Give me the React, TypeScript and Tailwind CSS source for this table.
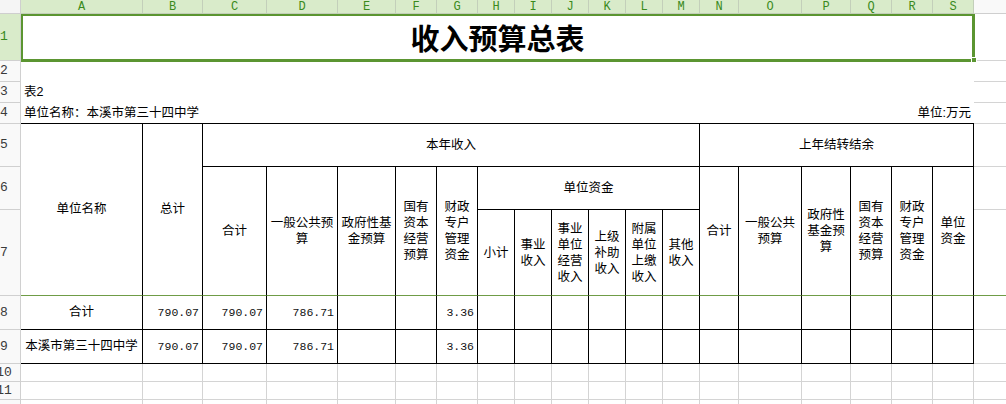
import React from "react";

const cols = ["A","B","C","D","E","F","G","H","I","J","K","L","M","N","O","P","Q","R","S"];

const GREEN_LINE = "border-b-[#6f9c46]";

function RH({ n, sel }: { n: string; sel?: boolean }) {
  return (
    <div
      className={
        "border-r border-b border-[#d0d0d0] overflow-hidden flex items-center font-['Liberation_Mono',monospace] text-[13px] " +
        (sel ? "bg-[#d9ebca] text-[#3a8a1c]" : "bg-[#f9f9f9] text-[#3a3a3a]")
      }
    >
      <span className="w-[8px] flex justify-center shrink-0 whitespace-nowrap">{n}</span>
    </div>
  );
}

function T({ green }: { green?: boolean }) {
  return <div className={"border-b " + (green ? "border-[#6f9c46]" : "border-[#d4d4d4]")} />;
}

function Lines({ t }: { t: string[] }) {
  return (
    <div className="text-center leading-[16px]">
      {t.map((l, i) => (
        <div key={i} className="whitespace-nowrap">{l}</div>
      ))}
    </div>
  );
}

const BC = "border-r border-b border-black flex items-center justify-center";
const BCG = "border-r border-r-black border-b " + GREEN_LINE + " flex items-center justify-center";
const NUM = "border-r border-b border-black flex items-center justify-end pr-[3px] font-['Liberation_Mono',monospace] text-[11.5px] text-[#111]";
const GC = "border-r border-b border-[#d4d4d4]";

function DataRow({ n, name }: { n: string; name: string }) {
  return (
    <>
      <RH n={n} />
      <div className={BC + " whitespace-nowrap"}>{name}</div>
      <div className={NUM}>790.07</div>
      <div className={NUM}>790.07</div>
      <div className={NUM}>786.71</div>
      <div className={BC} />
      <div className={BC} />
      <div className={NUM}>3.36</div>
      <div className={BC} />
      <div className={BC} />
      <div className={BC} />
      <div className={BC} />
      <div className={BC} />
      <div className={BC} />
      <div className={BC} />
      <div className={BC} />
      <div className={BC} />
      <div className={BC} />
      <div className={BC} />
      <div className={BC} />
      <T />
    </>
  );
}

function EmptyRow({ n }: { n: string }) {
  return (
    <>
      <RH n={n} />
      {cols.map((c) => (
        <div key={c} className={GC} />
      ))}
      <T />
    </>
  );
}

export default function App() {
  return (
    <div className="w-[1006px] h-[404px] overflow-hidden bg-white text-black font-['Liberation_Sans','Noto_Sans_CJK_SC',sans-serif] text-[12.5px]">
      <div className="grid grid-cols-[21px_122px_60px_64px_71px_58px_41px_41px_37px_37px_37px_37px_37px_37px_39px_63px_49px_41px_41px_41px_1fr] grid-rows-[14px_47px_21px_21px_21px_43px_43px_86px_34px_34px_18px_18px_18px] h-[422px]">
        {/* header row */}
        <div className="bg-[#f5f5f5] border-r border-b border-[#cfcfcf]" />
        {cols.map((c) => (
          <div
            key={c}
            className="bg-[#d9ebca] text-[#3a8a1c] border-r border-b border-[#c3cfba] flex items-center justify-center font-['Liberation_Mono',monospace] text-[12px] leading-none"
          >
            {c}
          </div>
        ))}
        <div className="bg-[#f9f9f9] border-b border-[#cfcfcf]" />

        {/* row 1 */}
        <RH n="1" sel />
        <div className="col-span-19 relative z-10 flex items-center justify-center">
          <span className="text-[29px] font-bold font-['Noto_Sans_CJK_SC',sans-serif] leading-none">收入预算总表</span>
          <div className="absolute top-0 left-0 right-[-1px] bottom-[-1px] border-t-2 border-l-2 border-r-[3px] border-b-[3px] border-[#5b9531]" />
          <div className="absolute right-[-3px] bottom-[-2px] w-[6px] h-[6px] bg-[#5b9531] border border-white" />
        </div>
        <T />

        {/* row 2 */}
        <RH n="2" />
        <div className="col-span-19" />
        <T />

        {/* row 3 */}
        <RH n="3" />
        <div className="col-span-19 flex items-center pl-[3px]">表2</div>
        <T />

        {/* row 4 */}
        <RH n="4" />
        <div className="col-span-19 flex items-center justify-between px-[3px] border-b border-black">
          <span>单位名称：本溪市第三十四中学</span>
          <span>单位:万元</span>
        </div>
        <T />

        {/* row 5 */}
        <RH n="5" />
        <div className={BCG + " row-span-3"}>单位名称</div>
        <div className={BCG + " row-span-3"}>总计</div>
        <div className={BC + " col-span-11"}>本年收入</div>
        <div className={BC + " col-span-6"}>上年结转结余</div>
        <T />

        {/* row 6 */}
        <RH n="6" />
        <div className={BCG + " row-span-2"}><Lines t={["合计"]} /></div>
        <div className={BCG + " row-span-2"}><Lines t={["一般公共预", "算"]} /></div>
        <div className={BCG + " row-span-2"}><Lines t={["政府性基", "金预算"]} /></div>
        <div className={BCG + " row-span-2"}><Lines t={["国有", "资本", "经营", "预算"]} /></div>
        <div className={BCG + " row-span-2"}><Lines t={["财政", "专户", "管理", "资金"]} /></div>
        <div className={BC + " col-span-6"}>单位资金</div>
        <div className={BCG + " row-span-2"}><Lines t={["合计"]} /></div>
        <div className={BCG + " row-span-2"}><Lines t={["一般公共", "预算"]} /></div>
        <div className={BCG + " row-span-2"}><Lines t={["政府性", "基金预", "算"]} /></div>
        <div className={BCG + " row-span-2"}><Lines t={["国有", "资本", "经营", "预算"]} /></div>
        <div className={BCG + " row-span-2"}><Lines t={["财政", "专户", "管理", "资金"]} /></div>
        <div className={BCG + " row-span-2"}><Lines t={["单位", "资金"]} /></div>
        <T />

        {/* row 7 */}
        <RH n="7" />
        <div className={BCG}><Lines t={["小计"]} /></div>
        <div className={BCG}><Lines t={["事业", "收入"]} /></div>
        <div className={BCG}><Lines t={["事业", "单位", "经营", "收入"]} /></div>
        <div className={BCG}><Lines t={["上级", "补助", "收入"]} /></div>
        <div className={BCG}><Lines t={["附属", "单位", "上缴", "收入"]} /></div>
        <div className={BCG}><Lines t={["其他", "收入"]} /></div>
        <T green />

        <DataRow n="8" name="合计" />
        <DataRow n="9" name="本溪市第三十四中学" />
        <EmptyRow n="10" />
        <EmptyRow n="11" />
        <EmptyRow n="" />
      </div>
    </div>
  );
}
